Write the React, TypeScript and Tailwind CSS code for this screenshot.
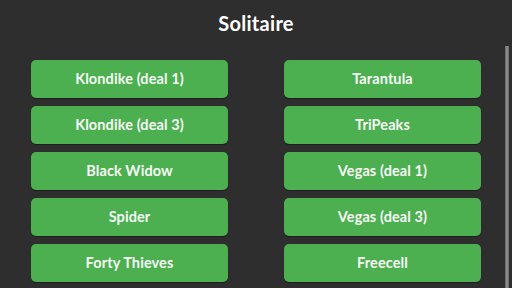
import React from "react";

const left = ["Klondike (deal 1)", "Klondike (deal 3)", "Black Widow", "Spider", "Forty Thieves"];
const right = ["Tarantula", "TriPeaks", "Vegas (deal 1)", "Vegas (deal 3)", "Freecell"];

export default function App() {
  const items: string[] = [];
  for (let i = 0; i < left.length; i++) {
    items.push(left[i], right[i]);
  }
  return (
    <div
      className="relative w-[512px] h-[288px] overflow-hidden bg-[#2f2e2e] text-white"
      style={{ fontFamily: "Lato, 'Noto Sans', sans-serif" }}
    >
      <div className="h-[45px] flex items-center justify-center">
        <h1 className="text-[20px] font-bold leading-none tracking-[0.3px]">Solitaire</h1>
      </div>
      <div className="grid grid-cols-2 gap-x-[56px] gap-y-[8px] px-[31px] pt-[15px]">
        {items.map((t) => (
          <button
            key={t}
            className="h-[38px] rounded-[5px] bg-[#4caf50] shadow-[0_1px_1px_rgba(0,0,0,0.35)] flex items-center justify-center pb-[1px] text-[14.5px] font-bold text-[#f6f9f5] tracking-[0.1px]"
          >
            {t}
          </button>
        ))}
      </div>
      <div className="absolute right-[3px] top-[46px] w-[4px] h-[242px] bg-[#8a8a8a] border-x border-[#6e6e6e]" />
    </div>
  );
}
